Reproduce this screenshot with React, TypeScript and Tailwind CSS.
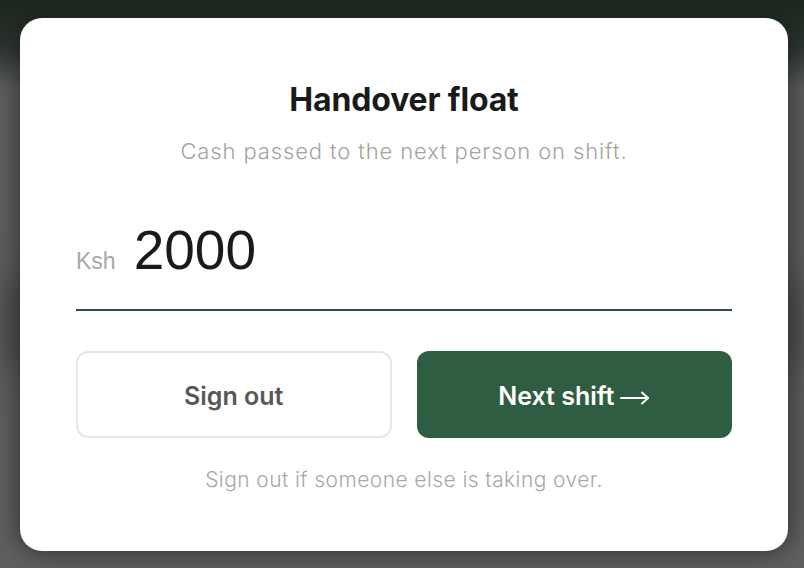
import React, { useState } from 'react';

export default function App() {
    const [amount, setAmount] = useState('2000');

    return (
        <div
            className="relative flex min-h-[568px] w-full overflow-hidden bg-[#606060] pl-5 pt-[18px]"
            style={{ fontFamily: 'Inter, "Noto Sans", sans-serif' }}
        >
            {/* blurred page behind the overlay */}
            <div className="pointer-events-none absolute inset-x-0 top-0 h-[90px] bg-gradient-to-b from-[#1e2620] via-[#2a322d] to-transparent" />
            <div className="pointer-events-none absolute left-0 right-0 top-[280px] h-[90px] bg-[#4a4c4a] blur-[18px]" />

            <div className="relative flex h-[533px] w-[768px] flex-col items-center rounded-[22px] bg-white px-[56px] pt-[63px] shadow-[0_0_28px_rgba(20,28,22,0.75)]">
                <h1 className="text-[32px] font-bold leading-[38px] tracking-[-0.005em] text-[#1a1a1a]">
                    Handover float
                </h1>
                <p className="mt-[18px] text-[22px] font-light leading-7 tracking-[0.04em] text-[#a3a3a3]">
                    Cash passed to the next person on shift.
                </p>

                <label className="mt-[53px] flex w-full items-baseline gap-[18px] border-b-2 border-[#2e4d3d] pb-[27px]">
                    <span
                        className="text-[23px] text-[#a8a8a8]"
                        style={{ fontFamily: '"Liberation Sans", Arial, sans-serif' }}
                    >
                        Ksh
                    </span>
                    <input
                        value={amount}
                        onChange={(e) => setAmount(e.target.value)}
                        className="h-[64px] min-w-0 flex-1 bg-transparent text-[55px] leading-[64px] text-[#1a1a1a] outline-none"
                        style={{ fontFamily: '"Liberation Sans", Arial, sans-serif' }}
                    />
                </label>

                <div className="mt-[40px] grid w-full grid-cols-2 gap-[25px]">
                    <button className="h-[87px] rounded-xl border-2 border-[#e6e6e2] bg-white pt-1 text-[25px] font-semibold text-[#585858]">
                        Sign out
                    </button>
                    <button className="flex h-[87px] items-center justify-center gap-[6px] rounded-xl bg-[#2f5d41] pt-1 text-[25px] font-semibold text-white">
                        Next shift
                        <svg width="30" height="14" viewBox="0 0 30 14" fill="none" stroke="currentColor" strokeWidth="2" strokeLinecap="round" strokeLinejoin="round" className="mt-[3px]">
                            <path d="M1 7h27" />
                            <path d="M22 1.5 28 7l-6 5.5" />
                        </svg>
                    </button>
                </div>

                <p className="mt-[28px] text-[21px] font-light leading-7 tracking-[0.02em] text-[#a8a8a8]">
                    Sign out if someone else is taking over.
                </p>
            </div>
        </div>
    );
}
